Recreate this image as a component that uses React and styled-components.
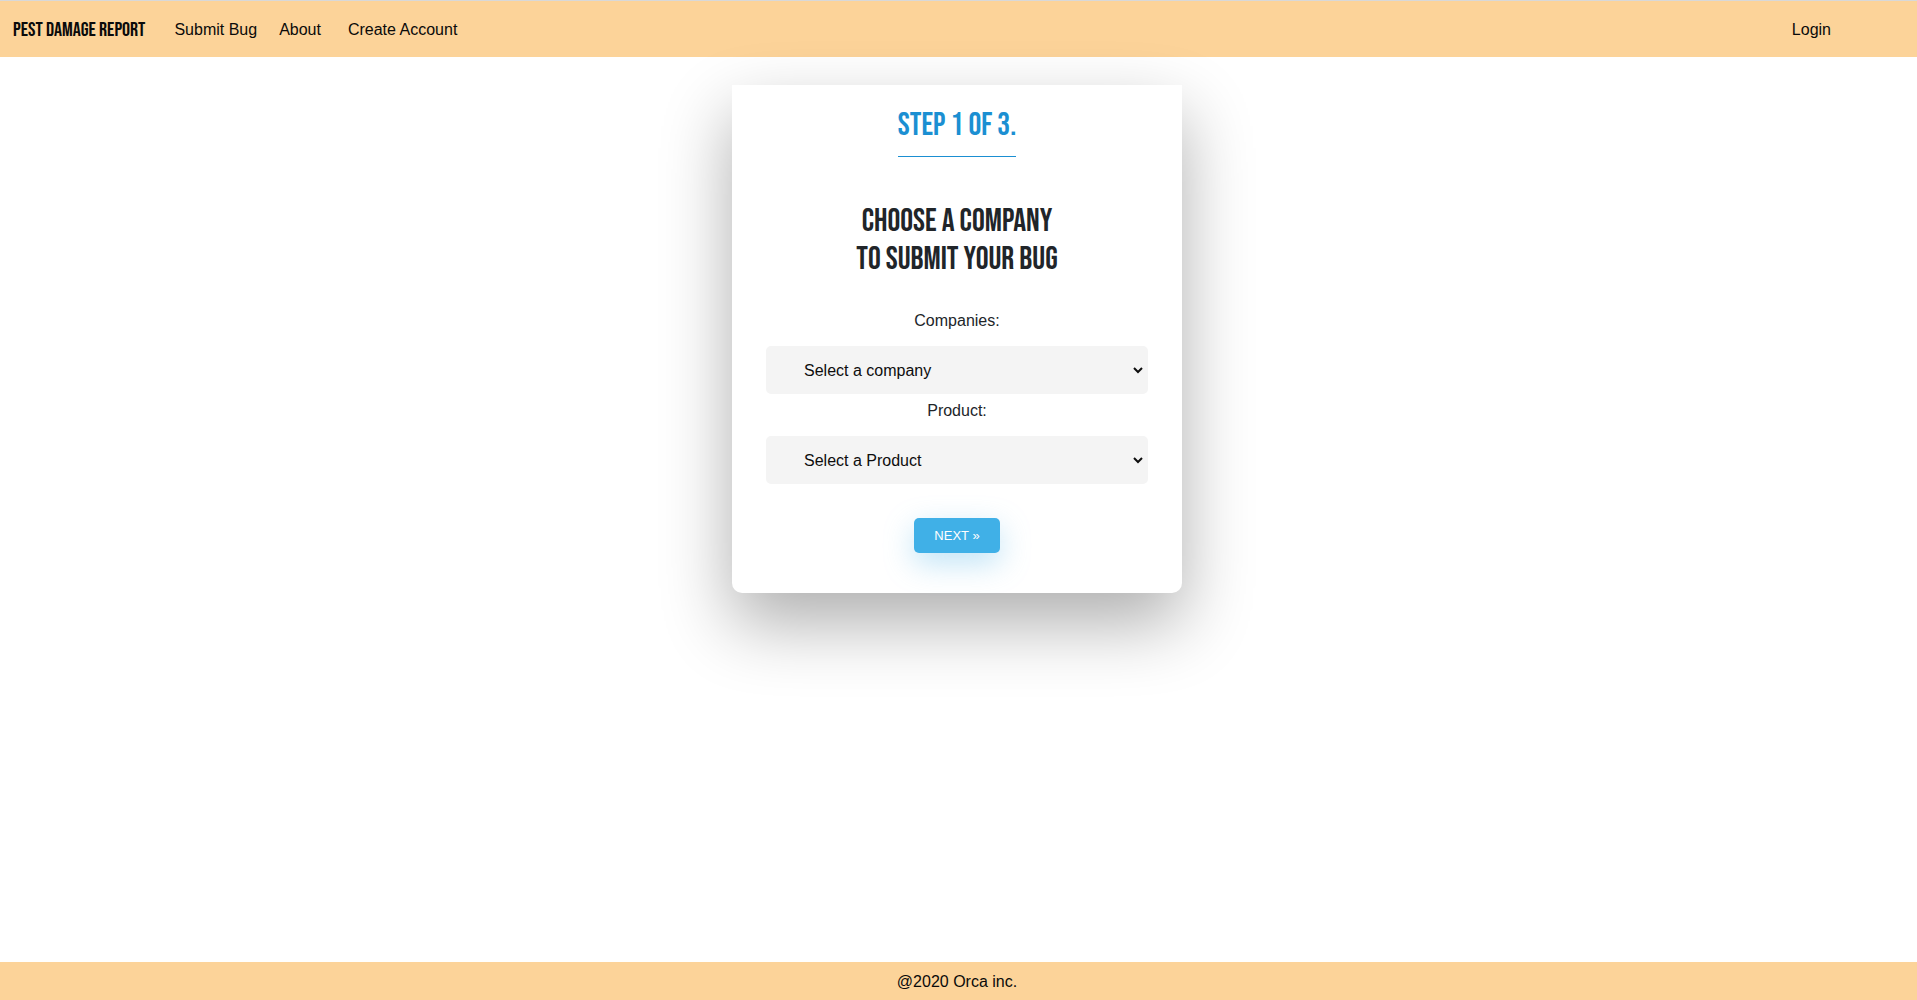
import React from "react";
import styled, { createGlobalStyle } from "styled-components";

const display = `"Bebas Neue", "Liberation Sans Narrow", "Liberation Sans", sans-serif`;
const body = `Helvetica, Arial, "Liberation Sans", sans-serif`;

const GlobalStyle = createGlobalStyle`
  *, *::before, *::after { box-sizing: border-box; }
  body { margin: 0; background: #fff; color: #212529; font: 16px/24px ${body}; }
`;

const Page = styled.div`
  min-height: 100vh;
  display: flex;
  flex-direction: column;
`;

const Nav = styled.nav`
  display: flex;
  align-items: center;
  height: 57px;
  padding: 2px 86px 0 13px;
  border-top: 1px solid #d8d8d8;
  background: #fcd399;
`;

const Brand = styled.a`
  margin-right: 29px;
  color: #0a0a0a;
  font: 20px/24px ${display};
  text-decoration: none;
  text-transform: uppercase;
  white-space: nowrap;
`;

const NavLinks = styled.div`
  display: flex;
  flex: 1;
`;

const NavLink = styled.a`
  margin-right: ${(p) => p.$gap || 0}px;
  color: #0a0a0a;
  text-decoration: none;
`;

const Main = styled.main`
  flex: 1;
  display: flex;
  justify-content: center;
  align-items: flex-start;
  padding: 28px 3px 28px 0;
`;

const Card = styled.form`
  width: 100%;
  max-width: 450px;
  display: flex;
  flex-direction: column;
  align-items: center;
  padding: 16px 34px 40px;
  border-radius: 0 0 10px 10px;
  background: #fff;
  box-shadow: 0 30px 70px 0 rgba(0, 0, 0, 0.32);
`;

const Title = styled.h1`
  margin: 0;
  font: 32px/38px ${display};
  text-align: center;
  text-transform: uppercase;
`;

const Step = styled(Title).attrs({ as: "h2" })`
  padding: 6px 0 11px;
  margin-bottom: 46px;
  border-bottom: 1px solid #1b8fd2;
  color: #1b8fd2;
`;

const Label = styled.label`
  margin-top: ${(p) => p.$gap}px;
  margin-bottom: 13px;
`;

const Select = styled.select`
  width: 100%;
  height: 48px;
  padding: 0 32px;
  border: 2px solid #f4f4f4;
  border-radius: 5px;
  background: #f4f4f4;
  color: #0d0d0d;
  font: 16px ${body};
`;

const Button = styled.button`
  height: 35px;
  margin-top: 34px;
  padding: 0 20px;
  border: 0;
  border-radius: 5px;
  background: #40b0e7;
  box-shadow: 0 10px 30px 0 rgba(95, 186, 233, 0.4);
  color: #fff;
  font: 13px ${body};
  text-transform: uppercase;
`;

const Footer = styled.footer`
  padding: 8px 3px 6px 0;
  background: #fcd399;
  color: #0a0a0a;
  text-align: center;
`;

export default function App() {
  return (
    <Page>
      <GlobalStyle />
      <Nav>
        <Brand href="#">Pest Damage Report</Brand>
        <NavLinks>
          <NavLink href="#submit" $gap={22}>Submit Bug</NavLink>
          <NavLink href="#about" $gap={27}>About</NavLink>
          <NavLink href="#create">Create Account</NavLink>
        </NavLinks>
        <NavLink href="#login">Login</NavLink>
      </Nav>
      <Main>
        <Card onSubmit={(e) => e.preventDefault()}>
          <Step>Step 1 of 3.</Step>
          <Title>
            Choose a company
            <br />
            to submit your bug
          </Title>
          <Label htmlFor="company" $gap={30}>Companies:</Label>
          <Select id="company">
            <option>Select a company</option>
          </Select>
          <Label htmlFor="product" $gap={5}>Product:</Label>
          <Select id="product">
            <option>Select a Product</option>
          </Select>
          <Button type="submit">Next »</Button>
        </Card>
      </Main>
      <Footer>@2020 Orca inc.</Footer>
    </Page>
  );
}
